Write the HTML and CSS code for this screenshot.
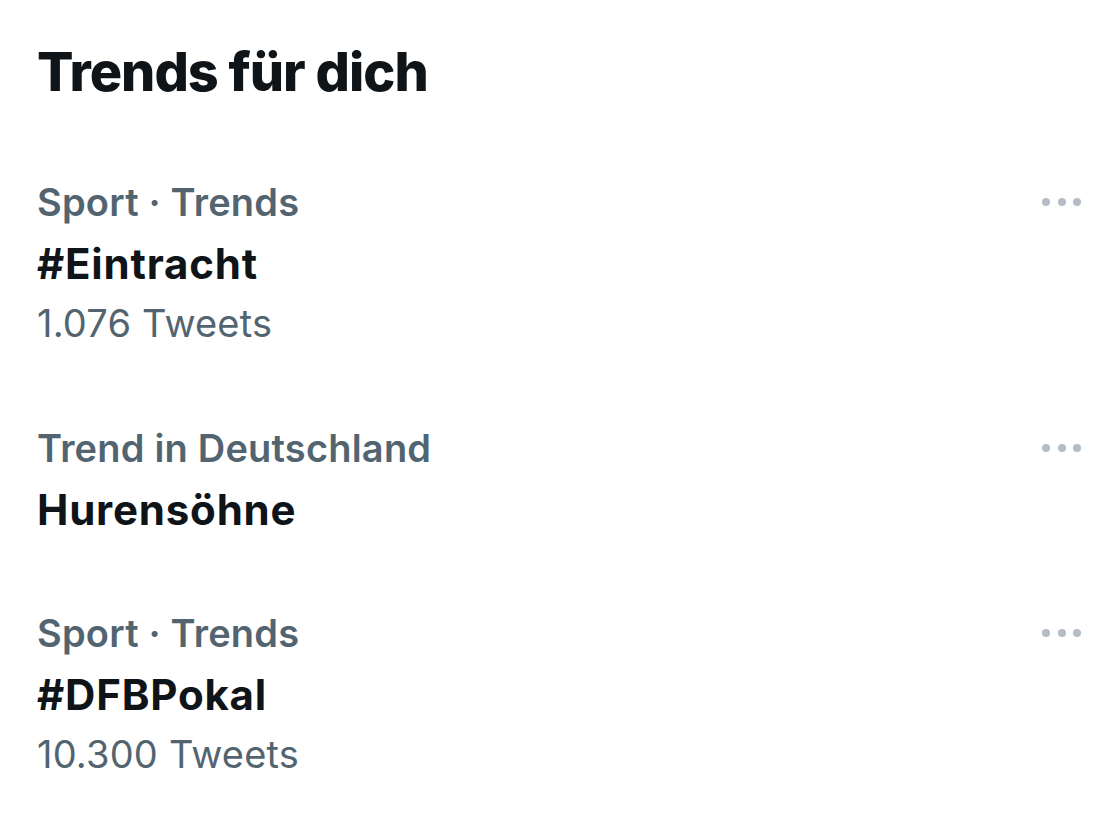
FILE: index.html
```html
<!DOCTYPE html>
<html lang="de">
<head>
<meta charset="utf-8">
<title>Trends für dich</title>
<link rel="stylesheet" href="styles.css">
</head>
<body>
<main class="panel">
  <h1 class="title">Trends für dich</h1>
  <ul class="trends">
    <li class="trend">
      <div class="trend-body">
        <div class="meta">Sport · Trends</div>
        <div class="name">#Eintracht</div>
        <div class="count">1.076 Tweets</div>
      </div>
      <div class="more" aria-label="Mehr"><span></span><span></span><span></span></div>
    </li>
    <li class="trend">
      <div class="trend-body">
        <div class="meta">Trend in Deutschland</div>
        <div class="name">Hurensöhne</div>
      </div>
      <div class="more" aria-label="Mehr"><span></span><span></span><span></span></div>
    </li>
    <li class="trend">
      <div class="trend-body">
        <div class="meta">Sport · Trends</div>
        <div class="name">#DFBPokal</div>
        <div class="count">10.300 Tweets</div>
      </div>
      <div class="more" aria-label="Mehr"><span></span><span></span><span></span></div>
    </li>
  </ul>
</main>
</body>
</html>
```

FILE: styles.css
```css
html, body {
  margin: 0;
  padding: 0;
  background: #ffffff;
}
body {
  font-family: Inter, "Noto Sans", "Liberation Sans", sans-serif;
  color: #0f1419;
}
.panel {
  padding: 40px 16px 0 37px;
}
.title {
  margin: 0;
  font-size: 54px;
  line-height: 64px;
  font-weight: 800;
  letter-spacing: -1px;
  color: #0f1419;
}
.trends {
  list-style: none;
  margin: 70px 0 0;
  padding: 0;
  display: flex;
  flex-direction: column;
  gap: 62px;
}
.trend {
  display: flex;
  justify-content: space-between;
  align-items: flex-start;
}
.trend-body {
  display: flex;
  flex-direction: column;
}
.meta {
  font-size: 38px;
  line-height: 56px;
  font-weight: 600;
  letter-spacing: 0.2px;
  color: #536471;
}
.name {
  font-size: 42px;
  line-height: 67px;
  font-weight: 700;
  letter-spacing: 0.8px;
  color: #0f1419;
}
.count {
  font-size: 38px;
  line-height: 52px;
  margin-bottom: 9px;
  font-weight: 400;
  letter-spacing: 0.2px;
  color: #536471;
}
.more {
  display: flex;
  gap: 7.5px;
  height: 56px;
  align-items: center;
}
.more span {
  width: 8px;
  height: 8px;
  border-radius: 50%;
  background: #b4bdc6;
}
```
